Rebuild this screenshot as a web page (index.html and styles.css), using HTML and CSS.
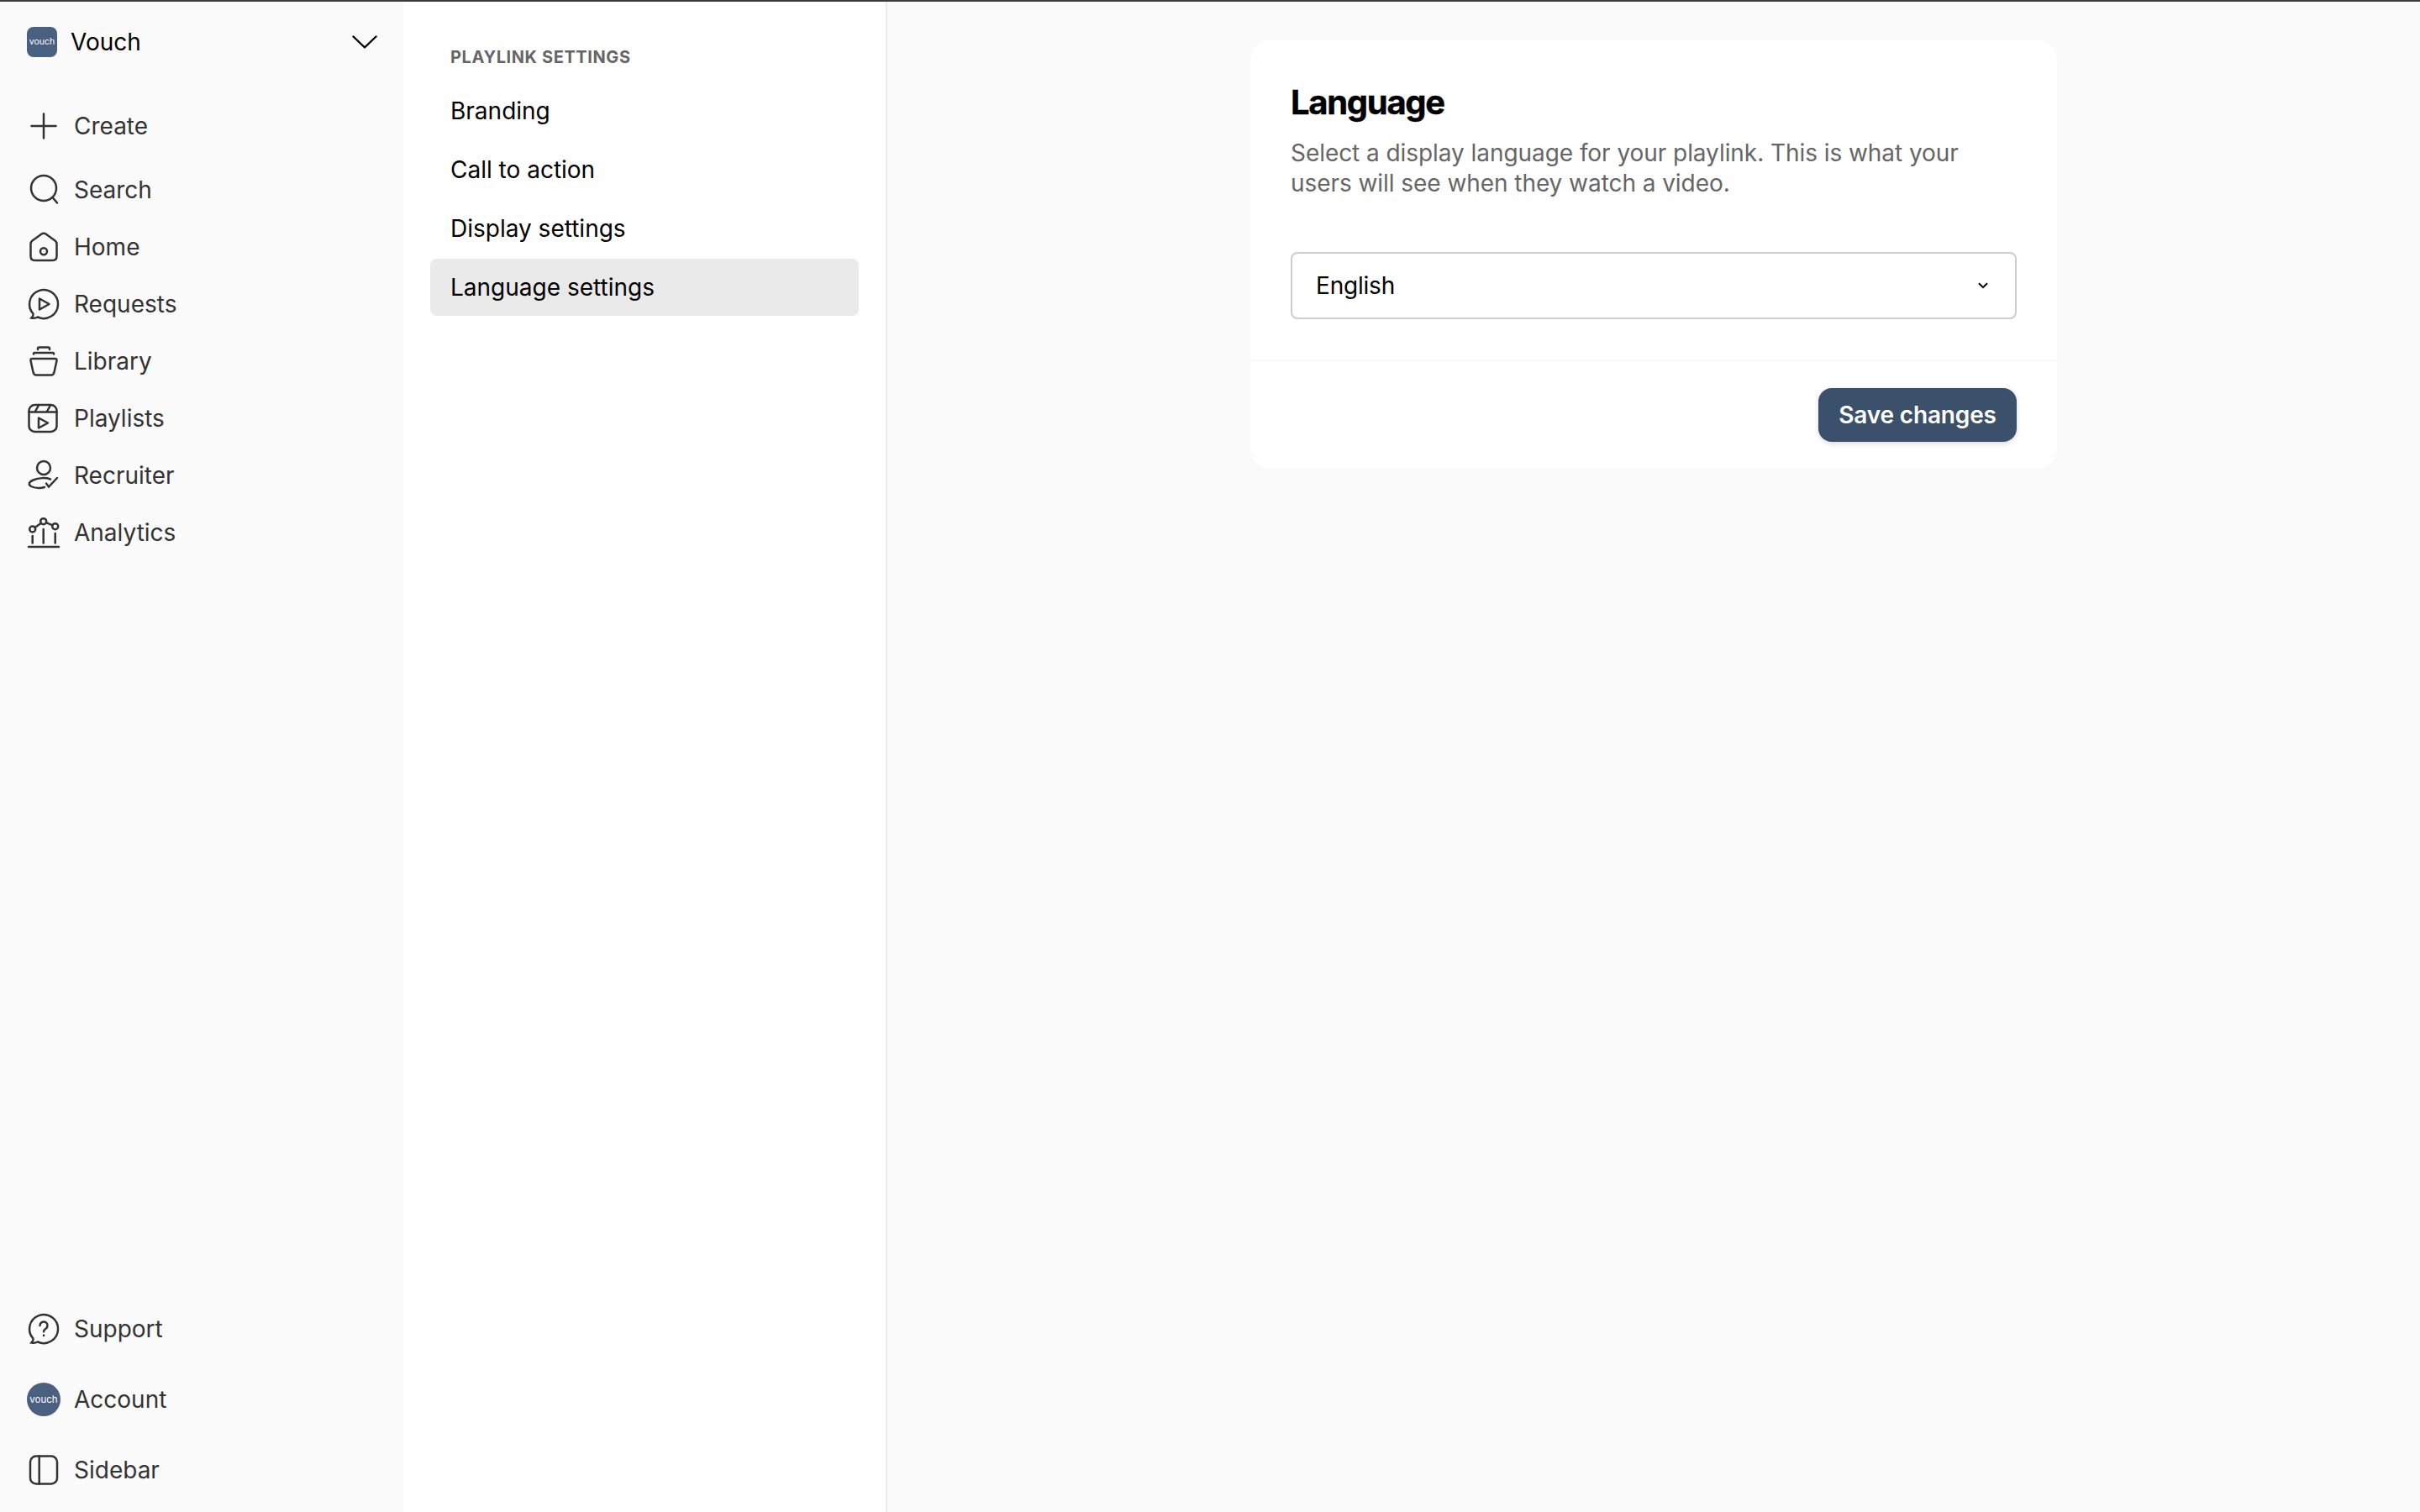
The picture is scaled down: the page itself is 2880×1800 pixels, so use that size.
FILE: index.html
```html
<!DOCTYPE html>
<html lang="en">
<head>
    <meta charset="UTF-8">
    <meta name="viewport" content="width=device-width, initial-scale=1.0">
    <title>Language settings - Vouch</title>
    <link rel="stylesheet" href="styles.css">
</head>
<body>
    <div class="app">
        <aside class="sidebar">
            <div class="sidebar-top">
                <div class="workspace">
                    <span class="logo">vouch</span>
                    <span class="workspace-name">Vouch</span>
                    <svg class="workspace-chevron" viewBox="0 0 30 16"><path d="M1.5 1.5 15 14.5 28.5 1.5"/></svg>
                </div>
                <a class="nav-item nav-create">
                    <svg class="icon" viewBox="0 0 36 36"><path d="M18 3.500v29M3.500 18h29"/></svg>
                    Create
                </a>
                <a class="nav-item">
                    <svg class="icon" viewBox="0 0 36 36"><circle cx="18" cy="16" r="15"/><path d="M28.500 27 34 33.500"/></svg>
                    Search
                </a>
                <a class="nav-item">
                    <svg class="icon" viewBox="0 0 36 36"><path d="M4.500 10.500 15.500 2.500q2.500-1.500 5 0L31.500 10.500q2 1.500 2 4V29q0 5-5 5h-21q-5 0-5-5V14.500q0-2.500 2-4z"/><circle cx="18" cy="23.300" r="4"/></svg>
                    Home
                </a>
                <a class="nav-item">
                    <svg class="icon" viewBox="0 0 36 36"><path d="M5.500 29.500A17 17 0 1 1 11 33.500C9 34.500 6 35 3.500 34.500 5 33 5.800 31.500 5.500 29.500z"/><path class="join" d="M13 11.500 24.500 18 13 24.500z"/></svg>
                    Requests
                </a>
                <a class="nav-item">
                    <svg class="icon" viewBox="0 0 36 36"><path d="M11 4V3q0-1.500 1.500-1.500h11Q25 1.500 25 3v1M6 9.500V9q0-1 1-1h22q1 0 1 1v.5"/><path d="M4.500 15h27q2.500 0 2 2.500L30.500 31q-.8 3.500-3.500 3.500H9Q6.300 34.500 5.500 31L2.500 17.500q-.5-2.500 2-2.500z"/></svg>
                    Library
                </a>
                <a class="nav-item">
                    <svg class="icon" viewBox="0 0 36 36"><rect x="0.500" y="2" width="33" height="32" rx="7"/><path d="M.5 10.500h33M12 2.500 7.500 10.500M26 2.500l-4.500 8"/><path class="join" d="M12 17.500 23 23.500 12 29.500z"/></svg>
                    Playlists
                </a>
                <a class="nav-item">
                    <svg class="icon" viewBox="0 0 36 36"><circle cx="18" cy="9" r="8"/><path d="M26 22.500C21 20.500 12 20.500 5.500 23.500 0 26 -.5 29 3 31 7 33 14 33.500 19 32"/><path d="M21 27.500 24 31.500 34 21"/></svg>
                    Recruiter
                </a>
                <a class="nav-item">
                    <svg class="icon" viewBox="0 0 36 36"><circle cx="4.700" cy="14" r="3.500"/><circle cx="17.700" cy="4.700" r="3.500"/><circle cx="31.700" cy="10.700" r="3.500"/><path d="M7.500 12 15 6.700M21 6.200 28.500 9.300M4.700 22v8.500M17.700 14v16.500M31.700 19v11.500M0 35h36"/></svg>
                    Analytics
                </a>
            </div>
            <div class="sidebar-bottom">
                <a class="nav-item nav-tall">
                    <svg class="icon" viewBox="0 0 36 36"><path d="M5.500 29.500A17 17 0 1 1 11 33.500C9 34.500 6 35 3.500 34.500 5 33 5.800 31.500 5.500 29.500z"/><path d="M13.500 14a4.500 4.500 0 1 1 7 3.700c-1.600 1-2.500 1.800-2.500 3.500"/><path d="M18 25.500v.5"/></svg>
                    Support
                </a>
                <a class="nav-item nav-tall">
                    <span class="avatar">vouch</span>
                    Account
                </a>
                <a class="nav-item nav-tall">
                    <svg class="icon" viewBox="0 0 36 36"><rect x="2" y="1.500" width="32" height="33" rx="7"/><path d="M12.700 1.500v33"/></svg>
                    Sidebar
                </a>
            </div>
        </aside>

        <nav class="subnav">
            <div class="subnav-title">PLAYLINK SETTINGS</div>
            <a class="subnav-item">Branding</a>
            <a class="subnav-item">Call to action</a>
            <a class="subnav-item">Display settings</a>
            <a class="subnav-item active">Language settings</a>
        </nav>

        <main class="main">
            <section class="card">
                <div class="card-body">
                    <h2>Language</h2>
                    <p>Select a display language for your playlink. This is what your users will see when they watch a video.</p>
                    <div class="select">
                        English
                        <svg class="select-chevron" viewBox="0 0 12 8"><path d="M1 1.200 6 6.200 11 1.200"/></svg>
                    </div>
                </div>
                <div class="card-footer">
                    <button>Save changes</button>
                </div>
            </section>
        </main>
    </div>
</body>
</html>
```

FILE: styles.css
```css
* { box-sizing: border-box; }

body {
    margin: 0;
    font-family: Inter, "Noto Sans", sans-serif;
    background: #fafafa;
    color: #000;
}

.app {
    display: flex;
    height: 1800px;
    border-top: 2px solid #3a3a3a;
}

/* left sidebar */
.sidebar {
    width: 480px;
    padding-left: 32px;
    padding-right: 32px;
    padding-bottom: 8px;
    display: flex;
    flex-direction: column;
    justify-content: space-between;
    background: #fafafa;
}
.workspace {
    display: flex;
    align-items: center;
    height: 96px;
}
.logo {
    width: 36px;
    height: 36px;
    border-radius: 8px;
    background: #4a6080;
    color: #fff;
    font-size: 10.500px;
    line-height: 36px;
    text-align: center;
}
.workspace-name {
    margin-left: 16px;
    font-size: 28px;
}
.workspace-chevron {
    width: 30px;
    height: 16px;
    margin-left: auto;
    margin-right: -1px;
    fill: none;
    stroke: #000;
    stroke-width: 2.400;
    stroke-linecap: round;
    stroke-linejoin: round;
}
.nav-item {
    display: flex;
    align-items: center;
    height: 68px;
    font-size: 28px;
    color: #333;
}
.nav-create {
    margin-top: 18px;
    margin-bottom: 8px;
}
.nav-tall { height: 84px; }
.icon {
    width: 36px;
    height: 36px;
    margin-left: 2px;
    margin-right: 18px;
    flex: none;
    overflow: visible;
    fill: none;
    stroke: #333;
    stroke-width: 2.500;
    stroke-linecap: round;
}
.icon .join { stroke-linejoin: round; }
.avatar {
    width: 40px;
    height: 40px;
    margin-right: 16px;
    border-radius: 50%;
    background: #4a6080;
    color: #fff;
    font-size: 11.500px;
    line-height: 40px;
    text-align: center;
}

/* settings list */
.subnav {
    width: 576px;
    padding: 52px 32px 0;
    background: #fff;
    border-right: 2px solid #ececec;
    display: flex;
    flex-direction: column;
    gap: 2px;
}
.subnav-title {
    height: 28px;
    margin-bottom: 14px;
    padding-left: 24px;
    font-size: 20px;
    font-weight: 700;
    line-height: 28px;
    letter-spacing: 0.6px;
    color: #666;
}
.subnav-item {
    height: 68px;
    padding-left: 24px;
    font-size: 28px;
    line-height: 68px;
    border-radius: 8px;
}
.subnav-item.active { background: #eaeaea; }

/* content */
.main {
    flex: 1;
    display: flex;
    justify-content: center;
    align-items: flex-start;
    padding-top: 46px;
}
.card {
    width: 960px;
    background: #fff;
    border-radius: 24px;
}
.card-body {
    padding: 50px 48px 48px;
    border-bottom: 2px solid #f7f7f7;
}
h2 {
    margin: 0;
    font-size: 40px;
    font-weight: 700;
    line-height: 48px;
    letter-spacing: -1.300px;
    -webkit-text-stroke: 0.4px #000;
}
p {
    margin: 18px 0 64px;
    font-size: 28px;
    line-height: 36px;
    letter-spacing: -0.060px;
    color: #666;
}
.select {
    display: flex;
    align-items: center;
    justify-content: space-between;
    height: 80px;
    padding: 0 32px 0 28px;
    border: 2px solid #ccc;
    border-radius: 8px;
    font-size: 28px;
    letter-spacing: -0.200px;
}
.select-chevron {
    width: 12px;
    height: 8px;
    fill: none;
    stroke: #000;
    stroke-width: 2;
}
.card-footer {
    display: flex;
    justify-content: flex-end;
    padding: 32px 48px;
}
button {
    width: 236px;
    height: 64px;
    background: #3a506b;
    color: #fff;
    border: none;
    border-radius: 16px;
    box-shadow: 0 2px 6px rgba(0, 0, 0, 0.15);
    font-family: inherit;
    font-size: 28px;
    font-weight: 600;
    letter-spacing: -0.150px;
}
```
